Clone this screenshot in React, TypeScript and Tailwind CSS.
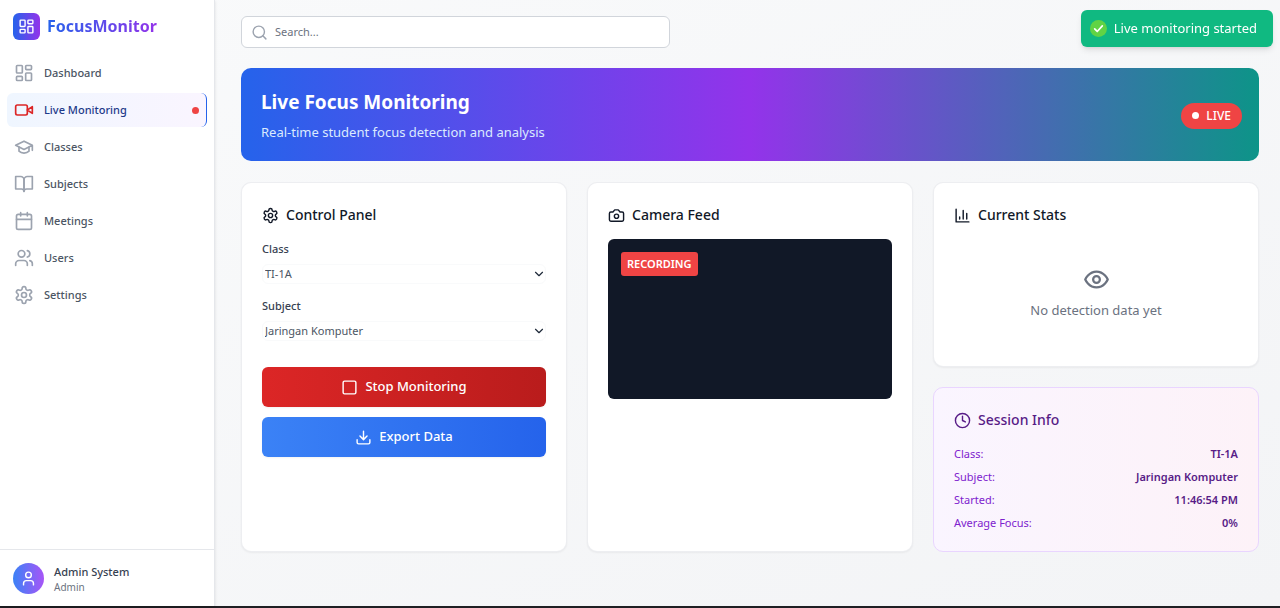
import type { ReactNode } from 'react';

type IconProps = { className?: string; children: ReactNode };

function Icon({ className = '', children }: IconProps) {
  return (
    <svg
      viewBox="0 0 24 24"
      fill="none"
      stroke="currentColor"
      strokeWidth="2"
      strokeLinecap="round"
      strokeLinejoin="round"
      aria-hidden="true"
      className={`shrink-0 ${className}`}
    >
      {children}
    </svg>
  );
}

const glyphs = {
  dashboard: (
    <>
      <rect width="7" height="9" x="3" y="3" rx="1" />
      <rect width="7" height="5" x="14" y="3" rx="1" />
      <rect width="7" height="9" x="14" y="12" rx="1" />
      <rect width="7" height="5" x="3" y="16" rx="1" />
    </>
  ),
  video: (
    <>
      <path d="m22 8-6 4 6 4V8Z" />
      <rect width="14" height="12" x="2" y="6" rx="2" />
    </>
  ),
  classes: (
    <>
      <path d="M22 10v6M2 10l10-5 10 5-10 5z" />
      <path d="M6 12v5c3 3 9 3 12 0v-5" />
    </>
  ),
  book: (
    <>
      <path d="M2 3h6a4 4 0 0 1 4 4v14a3 3 0 0 0-3-3H2z" />
      <path d="M22 3h-6a4 4 0 0 0-4 4v14a3 3 0 0 1 3-3h7z" />
    </>
  ),
  calendar: (
    <>
      <path d="M8 2v4M16 2v4M3 10h18" />
      <rect width="18" height="18" x="3" y="4" rx="2" />
    </>
  ),
  users: (
    <>
      <path d="M16 21v-2a4 4 0 0 0-4-4H6a4 4 0 0 0-4 4v2" />
      <circle cx="9" cy="7" r="4" />
      <path d="M22 21v-2a4 4 0 0 0-3-3.87M16 3.13a4 4 0 0 1 0 7.75" />
    </>
  ),
  settings: (
    <>
      <path d="M12.22 2h-.44a2 2 0 0 0-2 2v.18a2 2 0 0 1-1 1.73l-.43.25a2 2 0 0 1-2 0l-.15-.08a2 2 0 0 0-2.73.73l-.22.38a2 2 0 0 0 .73 2.73l.15.1a2 2 0 0 1 1 1.72v.51a2 2 0 0 1-1 1.74l-.15.09a2 2 0 0 0-.73 2.73l.22.38a2 2 0 0 0 2.73.73l.15-.08a2 2 0 0 1 2 0l.43.25a2 2 0 0 1 1 1.73V20a2 2 0 0 0 2 2h.44a2 2 0 0 0 2-2v-.18a2 2 0 0 1 1-1.73l.43-.25a2 2 0 0 1 2 0l.15.08a2 2 0 0 0 2.73-.73l.22-.39a2 2 0 0 0-.73-2.73l-.15-.08a2 2 0 0 1-1-1.74v-.5a2 2 0 0 1 1-1.74l.15-.09a2 2 0 0 0 .73-2.73l-.22-.38a2 2 0 0 0-2.73-.73l-.15.08a2 2 0 0 1-2 0l-.43-.25a2 2 0 0 1-1-1.73V4a2 2 0 0 0-2-2z" />
      <circle cx="12" cy="12" r="3" />
    </>
  ),
  user: (
    <>
      <circle cx="12" cy="7" r="4" />
      <path d="M19 21v-2a4 4 0 0 0-4-4H9a4 4 0 0 0-4 4v2" />
    </>
  ),
  search: (
    <>
      <circle cx="11" cy="11" r="8" />
      <path d="m21 21-4.3-4.3" />
    </>
  ),
  chevron: <path d="m6 9 6 6 6-6" />,
  square: <rect width="18" height="18" x="3" y="3" rx="2" />,
  download: (
    <>
      <path d="M21 15v4a2 2 0 0 1-2 2H5a2 2 0 0 1-2-2v-4" />
      <path d="m7 10 5 5 5-5M12 15V3" />
    </>
  ),
  camera: (
    <>
      <path d="M14.5 4h-5L7 7H4a2 2 0 0 0-2 2v9a2 2 0 0 0 2 2h16a2 2 0 0 0 2-2V9a2 2 0 0 0-2-2h-3l-2.5-3z" />
      <circle cx="12" cy="13" r="3" />
    </>
  ),
  chart: <path d="M3 3v18h18M18 17V9M13 17V5M8 17v-3" />,
  eye: (
    <>
      <path d="M2 12s3-7 10-7 10 7 10 7-3 7-10 7-10-7-10-7Z" />
      <circle cx="12" cy="12" r="3" />
    </>
  ),
  clock: (
    <>
      <circle cx="12" cy="12" r="10" />
      <path d="M12 6v6l4 2" />
    </>
  ),
};

const navItems = [
  { label: 'Dashboard', icon: glyphs.dashboard },
  { label: 'Live Monitoring', icon: glyphs.video, active: true },
  { label: 'Classes', icon: glyphs.classes },
  { label: 'Subjects', icon: glyphs.book },
  { label: 'Meetings', icon: glyphs.calendar },
  { label: 'Users', icon: glyphs.users },
  { label: 'Settings', icon: glyphs.settings },
];

const session = [
  ['Class:', 'TI-1A'],
  ['Subject:', 'Jaringan Komputer'],
  ['Started:', '11:46:54 PM'],
  ['Average Focus:', '0%'],
];

function Sidebar() {
  return (
    <aside className="flex w-[215px] shrink-0 flex-col border-r border-gray-200 bg-white shadow-sm">
      <div className="flex items-center gap-[7px] px-[13px] pt-[13px] pb-4">
        <span className="flex size-[27px] items-center justify-center rounded-md bg-linear-to-r/srgb from-[#2563eb] to-[#9333ea] text-white">
          <Icon className="size-[17px]">{glyphs.dashboard}</Icon>
        </span>
        <span className="bg-linear-to-r/srgb from-[#2563eb] to-[#9333ea] bg-clip-text text-[16px] leading-[27px] font-bold text-transparent">
          FocusMonitor
        </span>
      </div>
      <nav className="flex flex-col gap-[3px] px-[7px]">
        {navItems.map((item) => (
          <a
            key={item.label}
            href="#"
            aria-current={item.active ? 'page' : undefined}
            className={
              item.active
                ? 'flex h-[34px] items-center gap-[10px] rounded-md border-r border-[#2563eb] bg-linear-to-r/srgb from-[#eff6ff] to-[#faf5ff] px-[7px] text-[11px] font-medium text-[#1e3a8a]'
                : 'flex h-[34px] items-center gap-[10px] rounded-md px-[7px] text-[11px] font-medium text-[#4b5563]'
            }
          >
            <Icon className={item.active ? 'size-5 text-[#dc2626]' : 'size-5 text-[#9ca3af]'}>{item.icon}</Icon>
            {item.label}
            {item.active && <span className="ml-auto size-[7px] rounded-full bg-[#ef4444]" />}
          </a>
        ))}
      </nav>
      <div className="mt-auto flex items-center gap-[10px] border-t border-gray-200 px-[13px] pt-[13px] pb-3">
        <span className="flex size-[31px] items-center justify-center rounded-full bg-linear-to-r/srgb from-[#3b82f6] to-[#a855f7] text-white">
          <Icon className="size-[17px]">{glyphs.user}</Icon>
        </span>
        <div>
          <p className="text-[11px] leading-4 font-medium text-[#374151]">Admin System</p>
          <p className="text-[10px] leading-[14px] text-[#6b7280]">Admin</p>
        </div>
      </div>
    </aside>
  );
}

function CardTitle({ icon, children }: { icon: ReactNode; children: ReactNode }) {
  return (
    <h2 className="flex items-center gap-[7px] text-[14px] leading-6 font-medium">
      <Icon className="size-[17px]">{icon}</Icon>
      {children}
    </h2>
  );
}

function SelectField({ id, label, options }: { id: string; label: string; options: string[] }) {
  return (
    <div>
      <label htmlFor={id} className="block text-[11px] leading-[18px] font-medium text-[#374151]">
        {label}
      </label>
      <div className="mt-[6px] grid items-center">
        <select
          id={id}
          className="col-start-1 row-start-1 h-5 w-full appearance-none rounded-md border border-gray-50 bg-white px-[2px] text-[11px] text-[#4b5563]"
        >
          {options.map((o) => (
            <option key={o}>{o}</option>
          ))}
        </select>
        <Icon className="pointer-events-none col-start-1 row-start-1 size-[14px] justify-self-end text-gray-800">
          {glyphs.chevron}
        </Icon>
      </div>
    </div>
  );
}

const cardClass = 'rounded-[10px] border border-gray-200/70 bg-white p-5 text-[#111827] shadow-xs';
const buttonClass =
  'flex h-10 w-full items-center justify-center gap-[7px] rounded-md bg-linear-to-r/srgb text-[13px] font-medium text-white shadow-xs';

export default function App() {
  return (
    <div className="flex min-h-screen border-b-2 border-[#1f1f23] bg-linear-to-br/srgb from-[#f9fafb] to-[#f3f4f6] font-['Noto_Sans',sans-serif]">
      <Sidebar />

      <main className="min-w-0 flex-1 pt-4 pr-[21px] pb-6 pl-[26px]">
        <label className="flex h-8 max-w-[429px] items-center gap-[7px] rounded-md border border-[#d1d5db] bg-white px-[9px]">
          <Icon className="size-[17px] text-[#9ca3af]">{glyphs.search}</Icon>
          <input
            type="search"
            aria-label="Search"
            placeholder="Search..."
            className="min-w-0 flex-1 bg-transparent text-[11px] outline-none placeholder:text-[#6b7280]"
          />
        </label>

        <header className="mt-5 flex items-center justify-between rounded-[10px] bg-linear-to-r/srgb from-[#2563eb] via-[#9333ea] to-[#0d9488] pt-5 pr-[17px] pb-[18px] pl-5 text-white">
          <div>
            <h1 className="text-[19px] leading-7 font-bold">Live Focus Monitoring</h1>
            <p className="mt-[5px] text-[13px] leading-[22px] text-[#dbeafe]">
              Real-time student focus detection and analysis
            </p>
          </div>
          <span className="flex h-[26px] items-center gap-[7px] rounded-full bg-[#ef4444] px-[11px] text-[12px] font-medium">
            <span className="size-[7px] rounded-full bg-white" />
            LIVE
          </span>
        </header>

        <div className="mt-[21px] grid grid-cols-3 gap-5">
          <section className={cardClass}>
            <CardTitle icon={glyphs.settings}>Control Panel</CardTitle>
            <div className="mt-[13px] flex flex-col gap-[13px]">
              <SelectField id="class" label="Class" options={['TI-1A']} />
              <SelectField id="subject" label="Subject" options={['Jaringan Komputer']} />
            </div>
            <div className="mt-[26px] flex flex-col gap-[10px]">
              <button type="button" className={`${buttonClass} from-[#dc2626] to-[#b91c1c]`}>
                <Icon className="size-[17px]">{glyphs.square}</Icon>
                Stop Monitoring
              </button>
              <button type="button" className={`${buttonClass} from-[#3b82f6] to-[#2563eb]`}>
                <Icon className="size-[17px]">{glyphs.download}</Icon>
                Export Data
              </button>
            </div>
          </section>

          <section className={cardClass}>
            <CardTitle icon={glyphs.camera}>Camera Feed</CardTitle>
            <div className="mt-3 flex h-40 items-start rounded-md bg-[#111827] p-[13px]">
              <span className="flex h-6 items-center rounded-[3px] bg-[#ef4444] px-[6px] text-[11px] font-semibold text-white">
                RECORDING
              </span>
            </div>
          </section>

          <div className="flex flex-col gap-5">
            <section className={cardClass}>
              <CardTitle icon={glyphs.chart}>Current Stats</CardTitle>
              <div className="flex flex-col items-center pt-[39px] pb-[26px] text-[#6b7280]">
                <Icon className="size-[27px]">{glyphs.eye}</Icon>
                <p className="mt-[7px] text-[13px] leading-5">No detection data yet</p>
              </div>
            </section>

            <section className="rounded-[10px] border border-[#e9d5ff] bg-linear-to-r/srgb from-[#faf5ff] to-[#fdf2f8] p-5 text-[#581c87]">
              <CardTitle icon={glyphs.clock}>Session Info</CardTitle>
              <dl className="mt-[13px] flex flex-col gap-[6px] text-[11px] leading-[17px]">
                {session.map(([term, value]) => (
                  <div key={term} className="flex justify-between">
                    <dt className="text-[#7e22ce]">{term}</dt>
                    <dd className="font-semibold">{value}</dd>
                  </div>
                ))}
              </dl>
            </section>
          </div>
        </div>
      </main>

      <div
        role="status"
        className="fixed top-[10px] right-[7px] flex h-[37px] items-center gap-[7px] rounded-md bg-[#10b981] pr-4 pl-[9px] text-[13px] text-white shadow-md"
      >
        <svg viewBox="0 0 20 20" className="size-[17px]" aria-hidden="true">
          <circle cx="10" cy="10" r="10" fill="#61d345" />
          <path d="m5.5 10.5 3 3 6-6.5" fill="none" stroke="#fff" strokeWidth="2" strokeLinecap="round" strokeLinejoin="round" />
        </svg>
        Live monitoring started
      </div>
    </div>
  );
}
